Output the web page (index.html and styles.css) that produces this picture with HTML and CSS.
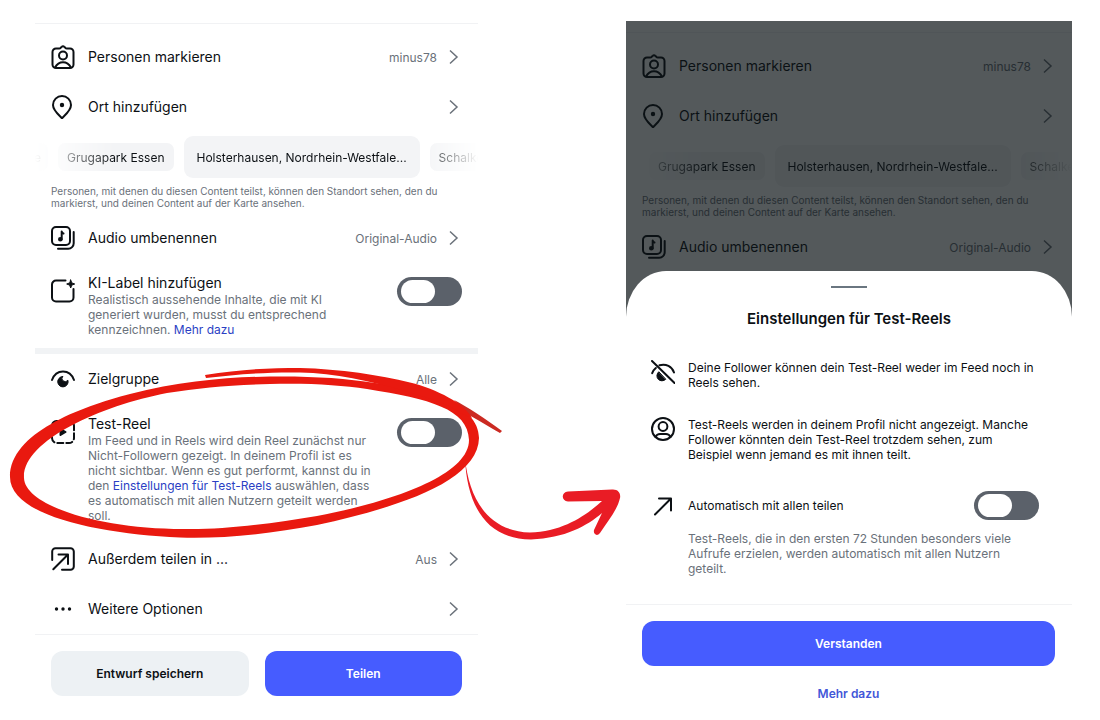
FILE: index.html
```html
<!DOCTYPE html>
<html lang="de">
<head>
<meta charset="utf-8">
<meta name="viewport" content="width=device-width, initial-scale=1">
<title>Test-Reels</title>
<link rel="stylesheet" href="styles.css">
</head>
<body>
<svg class="defs" aria-hidden="true">
  <symbol id="tag" viewBox="0 0 24 24"><path d="M5 3.500h3.100c.7 0 1.300-.3 1.800-.9L10.900 1.700c.6-.7 1.600-.7 2.200 0l1 .9c.5.6 1.100.9 1.800.9H19a3.500 3.500 0 0 1 3.500 3.500V19.500a3.500 3.500 0 0 1-3.500 3.500H5a3.500 3.500 0 0 1-3.500-3.500V7a3.500 3.500 0 0 1 3.500-3.500z M4 22.500C6 18.800 8.500 17.300 12 17.300s6 1.500 8 5.200"/><circle cx="12" cy="10.500" r="4"/></symbol>
  <symbol id="pin" viewBox="0 0 24 24"><path d="M11 23.200C8 20 2 15.500 2 10a9 9 0 0 1 18 0c0 5.500-6 10-9 13.200z"/><circle class="solid" cx="11" cy="10" r="1.200"/></symbol>
  <symbol id="audio" viewBox="0 0 24 24"><rect x="1" y="1" width="18" height="18" rx="4"/><path d="M22.700 6v11.200a5.500 5.500 0 0 1-5.500 5.500H7"/><path d="M10.700 13.500V5.500c.3 1.500 1.200 1.700 1.800 2"/><ellipse class="solid" cx="9.300" cy="13.300" rx="1.300" ry="1.200"/></symbol>
  <symbol id="ailabel" viewBox="0 0 24 24"><path d="M14.500 1.500H5a4 4 0 0 0-4 4v13a4 4 0 0 0 4 4h13.500a4 4 0 0 0 4-4V10"/><path class="solid" stroke-width="1" d="M19.700 1l1.100 2.900 2.900 1.100-2.900 1.100-1.100 2.900-1.100-2.900L15.700 5l2.900-1.100z"/></symbol>
  <symbol id="eye" viewBox="0 0 24 24"><path d="M1 13C3 7.500 7 4.500 12 4.500s9 3 11 8.500"/><path class="solid" stroke-width="1" d="M11.500 9.500a3.200 3.200 0 0 0 5.400 3.700A5.200 5.200 0 1 1 11.500 9.500z"/></symbol>
  <symbol id="testreel" viewBox="0 0 24 24"><rect x="1" y="1" width="22" height="22" rx="5" stroke-dasharray="6 3"/><path class="solid" d="M9.500 9l5 3-5 3z"/></symbol>
  <symbol id="sharebox" viewBox="0 0 24 24"><path d="M1.200 13V4.500A3.300 3.300 0 0 1 4.500 1.200h15a3.300 3.300 0 0 1 3.300 3.300v15a3.300 3.300 0 0 1-3.300 3.300H11M2.300 22.200L17 7.500M7.500 7.500H17V17"/></symbol>
  <symbol id="dots" viewBox="0 0 24 24"><circle class="solid" stroke="none" cx="5.500" cy="12" r="1.700"/><circle class="solid" stroke="none" cx="12" cy="12" r="1.700"/><circle class="solid" stroke="none" cx="18.500" cy="12" r="1.700"/></symbol>
  <symbol id="eyeoff" viewBox="0 0 24 24"><path d="M1 1l22.500 22M1.200 13.200C2 11 3.200 9.300 4.800 8M8.500 5.300C15 3.500 21 6.500 23 12.500"/><path class="solid" stroke-width="1" d="M7.500 12a5 5 0 1 0 7 7.500z"/></symbol>
  <symbol id="profile" viewBox="0 0 24 24"><circle cx="12" cy="12" r="11"/><circle cx="12" cy="9.500" r="4.400"/><path d="M4.500 20C5.500 17.800 7 17 9 17h6c2 0 3.500.8 4.500 3"/></symbol>
  <symbol id="arrow" viewBox="0 0 24 24"><path d="M4 20.500L19.500 5M8 4.500h12v12"/></symbol>
  <symbol id="chevron" viewBox="0 0 16 16"><path d="M4 1.500L11 8l-7 6.500"/></symbol>
</svg>

<div class="page">
  <main class="phone">
    <div class="list">
      <a class="row" href="#"><svg class="icon"><use href="#tag"/></svg><span class="title">Personen markieren</span><span class="value">minus78</span><svg class="chevron"><use href="#chevron"/></svg></a>
      <a class="row" href="#"><svg class="icon"><use href="#pin"/></svg><span class="title">Ort hinzufügen</span><svg class="chevron"><use href="#chevron"/></svg></a>
      <div class="chips">
        <button class="chip chip-cut">e</button><button class="chip">Grugapark Essen</button><button class="chip chip-large">Holsterhausen, Nordrhein-Westfale...</button><button class="chip">Schalke</button>
      </div>
      <p class="note">Personen, mit denen du diesen Content teilst, können den Standort sehen, den du markierst, und deinen Content auf der Karte ansehen.</p>
      <a class="row" href="#"><svg class="icon"><use href="#audio"/></svg><span class="title">Audio umbenennen</span><span class="value">Original-Audio</span><svg class="chevron"><use href="#chevron"/></svg></a>
      <div class="option">
        <svg class="icon"><use href="#ailabel"/></svg>
        <div class="option-text">
          <label class="title" for="ai">KI-Label hinzufügen</label>
          <p class="desc">Realistisch aussehende Inhalte, die mit KI generiert wurden, musst du entsprechend kennzeichnen. <a href="#">Mehr dazu</a></p>
        </div>
        <input class="toggle" type="checkbox" role="switch" id="ai">
      </div>
    </div>
    <div class="list second">
      <a class="row" href="#"><svg class="icon"><use href="#eye"/></svg><span class="title">Zielgruppe</span><span class="value">Alle</span><svg class="chevron"><use href="#chevron"/></svg></a>
      <div class="option">
        <svg class="icon"><use href="#testreel"/></svg>
        <div class="option-text">
          <label class="title" for="test">Test-Reel</label>
          <p class="desc">Im Feed und in Reels wird dein Reel zunächst nur Nicht-Followern gezeigt. In deinem Profil ist es nicht sichtbar. Wenn es gut performt, kannst du in den <a href="#">Einstellungen für Test-Reels</a> auswählen, dass es automatisch mit allen Nutzern geteilt werden soll.</p>
        </div>
        <input class="toggle" type="checkbox" role="switch" id="test">
      </div>
      <a class="row" href="#"><svg class="icon"><use href="#sharebox"/></svg><span class="title">Außerdem teilen in ...</span><span class="value">Aus</span><svg class="chevron"><use href="#chevron"/></svg></a>
      <a class="row" href="#"><svg class="icon"><use href="#dots"/></svg><span class="title">Weitere Optionen</span><svg class="chevron"><use href="#chevron"/></svg></a>
    </div>
    <div class="actions">
      <button class="button">Entwurf speichern</button>
      <button class="button primary">Teilen</button>
    </div>
  </main>

  <section class="phone">
    <div class="dimmed">
      <div class="list">
        <div class="row"><svg class="icon"><use href="#tag"/></svg><span class="title">Personen markieren</span><span class="value">minus78</span><svg class="chevron"><use href="#chevron"/></svg></div>
        <div class="row"><svg class="icon"><use href="#pin"/></svg><span class="title">Ort hinzufügen</span><svg class="chevron"><use href="#chevron"/></svg></div>
        <div class="chips">
          <button class="chip chip-cut"></button><button class="chip">Grugapark Essen</button><button class="chip chip-large">Holsterhausen, Nordrhein-Westfale...</button><button class="chip">Schalke</button>
        </div>
        <p class="note">Personen, mit denen du diesen Content teilst, können den Standort sehen, den du markierst, und deinen Content auf der Karte ansehen.</p>
        <div class="row"><svg class="icon"><use href="#audio"/></svg><span class="title">Audio umbenennen</span><span class="value">Original-Audio</span><svg class="chevron"><use href="#chevron"/></svg></div>
      </div>
    </div>
    <div class="sheet" role="dialog" aria-labelledby="sheet-title">
      <div class="handle"></div>
      <h2 class="sheet-title" id="sheet-title">Einstellungen für Test-Reels</h2>
      <div class="facts">
        <div class="fact"><svg class="icon"><use href="#eyeoff"/></svg><p>Deine Follower können dein Test-Reel weder im Feed noch in Reels sehen.</p></div>
        <div class="fact"><svg class="icon"><use href="#profile"/></svg><p>Test-Reels werden in deinem Profil nicht angezeigt. Manche Follower könnten dein Test-Reel trotzdem sehen, zum Beispiel wenn jemand es mit ihnen teilt.</p></div>
        <div class="auto">
          <svg class="icon"><use href="#arrow"/></svg><label for="auto">Automatisch mit allen teilen</label><input class="toggle" type="checkbox" role="switch" id="auto">
          <p class="desc">Test-Reels, die in den ersten 72 Stunden besonders viele Aufrufe erzielen, werden automatisch mit allen Nutzern geteilt.</p>
        </div>
      </div>
      <div class="sheet-actions">
        <button class="button primary">Verstanden</button>
        <a class="more" href="#">Mehr dazu</a>
      </div>
    </div>
  </section>

  <svg class="marks" viewBox="0 0 1100 720" aria-hidden="true">
    <path class="tail" d="M454 400C466 406 486 419 502 431L500 433C488 426 478 420 465 413Z"/>
    <path class="arrow-mark" d="M465 459C469 495 485 531 530 532.500C565 532 590 512 602 501L568 501.500C561 501 561 492 568 491.500L612 489.500C618 489 621 493 620 498C617 511 607 522 600 533C597 537 593 534 594 530L602 513C587 526 565 538 531 539.500C483 539 467 501 465 459Z"/>
    <path class="circle-mark" fill-rule="evenodd" d="M10 477C10 433 80 407 130 394C180 381 230 377 270 376.500C310 376 345 378 375 383C425 389 479 404 479 438C478 481 400 507 317 525C270 534 220 539 180 537.500C100 534 10 516 10 477ZM24 478C25 506 100 529 183 529C220 530 270 524 317 516C385 503 469 477 469 440C468 409 430 399 367 389C340 385 310 383 270 384C230 385 200 388 167 393C100 406 22 441 24 478Z"/>
    <path class="circle-mark" d="M205 375C240 369 270 368 300 368C340 369 380 375 410 382.500C437 389 465 404 472 418L460 413C450 404 425 397 405 391C370 381 335 373 300 372.500C265 372 235 374.500 206 378Z"/>
  </svg>
</div>
</body>
</html>
```

FILE: styles.css
```css
* { box-sizing: border-box; }

body {
  margin: 0;
  background: #fff;
  color: #0c1014;
  font-family: Inter, "Liberation Sans", sans-serif;
  font-size: 12px;
  line-height: 15px;
}

p, h2 { margin: 0; }
a { color: inherit; text-decoration: none; }
button { font: inherit; color: inherit; border: 0; cursor: pointer; }

.defs { position: absolute; width: 0; height: 0; }

.page {
  position: relative;
  display: grid;
  grid-template-columns: 443fr 446fr;
  column-gap: 148px;
  align-items: start;
  padding: 21px 28px 16px 35px;
}

.phone { min-width: 0; }
main.phone { padding-top: 2px; }

.list { border-top: 1px solid #f1f2f4; padding-top: 8px; }
.second { border-top: 6px solid #f1f3f5; padding-top: 0; }

.row {
  display: flex;
  align-items: center;
  height: 50px;
  padding: 0 16px;
}

.icon {
  flex: none;
  width: 24px;
  height: 24px;
  margin-right: 13px;
  fill: none;
  stroke: currentColor;
  stroke-width: 2;
  stroke-linecap: round;
  stroke-linejoin: round;
}
.solid { fill: currentColor; }

.title { flex: 1; font-size: 14px; line-height: 18px; white-space: nowrap; }
.value { color: #6a717a; margin-right: 9px; }

.chevron {
  flex: none;
  width: 16px;
  height: 16px;
  fill: none;
  stroke: #6a717a;
  stroke-width: 1.5;
}

.chips {
  display: flex;
  align-items: center;
  gap: 10px;
  padding: 4px 0 7px;
  overflow: hidden;
  mask-image: linear-gradient(90deg, transparent, #000 80px, #000 calc(100% - 60px), transparent);
}
.chip {
  flex: none;
  height: 28px;
  padding: 0 9px;
  border-radius: 7px;
  background: #f3f4f6;
  white-space: nowrap;
}
.chip-cut { width: 23px; margin-left: -10px; }
.chip-large { height: 42px; padding: 0 13px; border-radius: 9px; }

.note {
  padding: 0 16px 4px;
  color: #6a717a;
  font-size: 10px;
  line-height: 12px;
}

.option {
  display: flex;
  align-items: flex-start;
  padding: 11px 16px;
}
.option .icon { margin-top: 5px; }
.option .toggle { margin-top: 3px; }
.option-text { flex: 1; margin-right: 23px; }
.option .title { display: block; }
.desc { color: #6a717a; }
.desc a { color: #2b3fc4; }

.toggle {
  appearance: none;
  flex: none;
  width: 65px;
  height: 29px;
  margin: 0;
  padding: 3px 4px;
  border-radius: 15px;
  background: #5b616a;
  cursor: pointer;
}
.toggle::before {
  content: "";
  display: block;
  width: 34px;
  height: 23px;
  border-radius: 12px;
  background: #fff;
}
.toggle:checked { background: #465cff; }
.toggle:checked::before { margin-left: auto; }

.actions {
  display: flex;
  gap: 16px;
  padding: 16px;
  border-top: 1px solid #f1f2f4;
}
.button {
  flex: 1;
  height: 45px;
  border-radius: 12px;
  background: #edf1f4;
  font-weight: 600;
}
.primary { background: #465cff; color: #fff; }

.dimmed { position: relative; padding: 11px 0 45px; }
.dimmed::after {
  content: "";
  position: absolute;
  inset: 0;
  background: rgba(12, 18, 21, 0.7);
}

.sheet {
  position: relative;
  margin-top: -46px;
  padding-top: 15px;
  border-radius: 40px 40px 0 0 / 46px 46px 0 0;
  background: #fff;
}
.handle {
  width: 36px;
  height: 2px;
  margin: 0 auto;
  background: #6a7680;
}
.sheet-title {
  margin-top: 21px;
  font-size: 15px;
  line-height: 20px;
  font-weight: 600;
  text-align: center;
}
.facts { padding: 31px 25px 28px; }
.fact {
  display: flex;
  align-items: flex-start;
  margin-bottom: 27px;
  padding-right: 9px;
}
.auto {
  display: grid;
  grid-template-columns: auto 1fr auto;
  align-items: center;
  padding: 2px 8px 0 0;
}
.auto .desc { grid-column: 2 / 4; margin-top: 11px; }

.sheet-actions {
  display: flex;
  flex-direction: column;
  border-top: 1px solid #f1f2f4;
  padding: 16px 17px 0 16px;
}
.sheet-actions .button { flex: none; }
.more {
  margin-top: 20px;
  color: #4357d8;
  font-weight: 600;
  text-align: center;
}

.marks {
  position: absolute;
  top: 0;
  left: 0;
  width: 100%;
  pointer-events: none;
}
.circle-mark { fill: #e9190f; }
.arrow-mark { fill: #e91c25; }
.tail { fill: #cb2a22; }
```
